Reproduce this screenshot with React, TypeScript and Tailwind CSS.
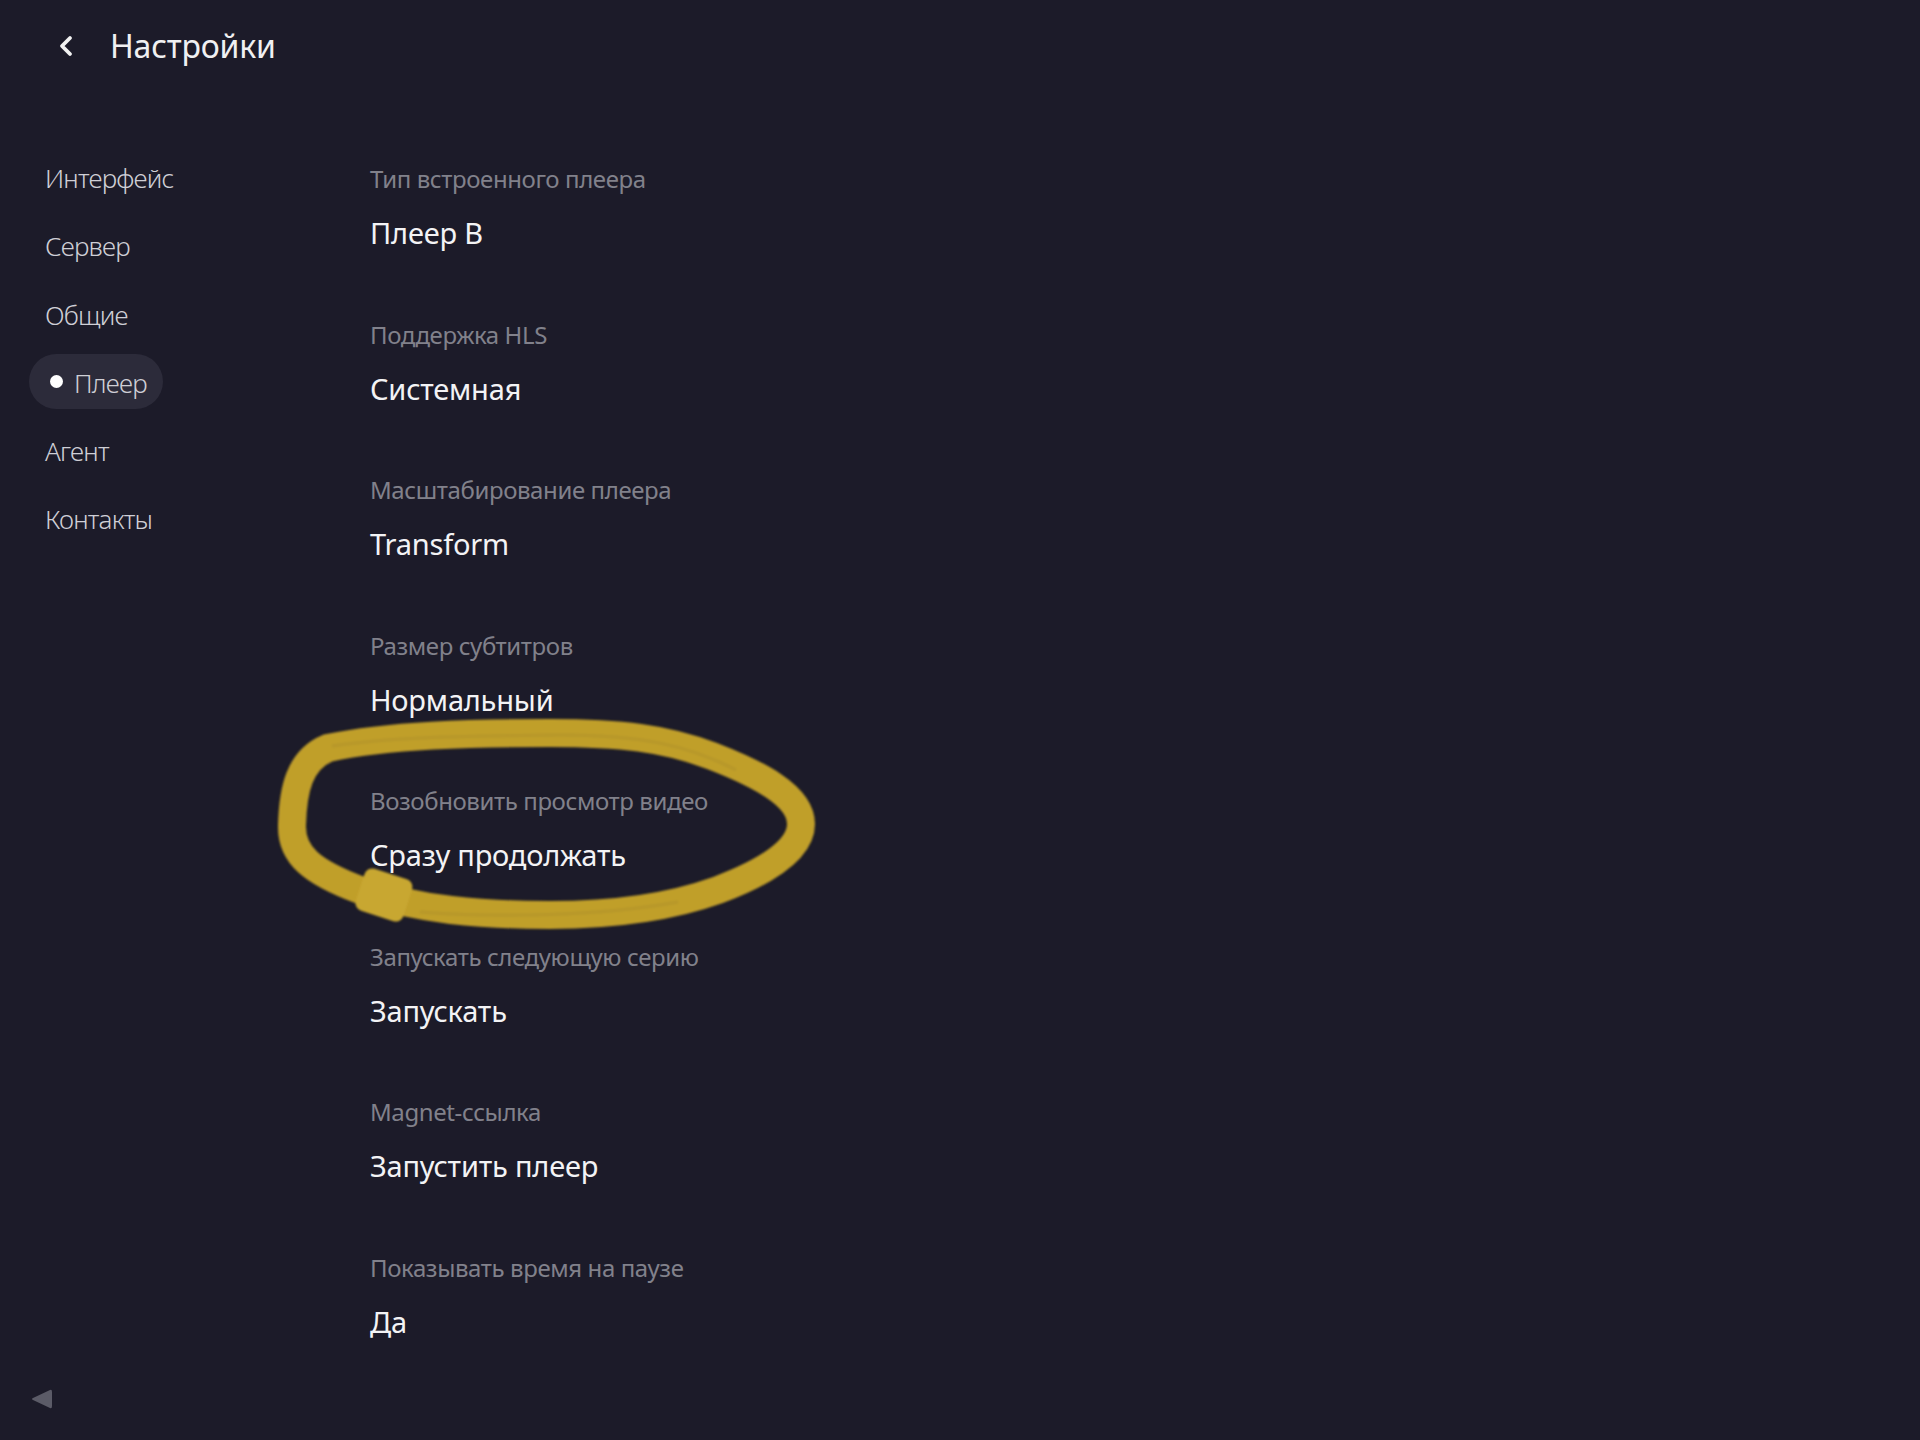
import React from "react";

const sidebar = ["Интерфейс", "Сервер", "Общие", "Плеер", "Агент", "Контакты"];
const active = "Плеер";

const settings: { label: string; value: string }[] = [
  { label: "Тип встроенного плеера", value: "Плеер B" },
  { label: "Поддержка HLS", value: "Системная" },
  { label: "Масштабирование плеера", value: "Transform" },
  { label: "Размер субтитров", value: "Нормальный" },
  { label: "Возобновить просмотр видео", value: "Сразу продолжать" },
  { label: "Запускать следующую серию", value: "Запускать" },
  { label: "Magnet-ссылка", value: "Запустить плеер" },
  { label: "Показывать время на паузе", value: "Да" },
];

function Highlight() {
  return (
    <svg
      className="pointer-events-none absolute left-0 top-0"
      width="1920"
      height="1440"
      viewBox="0 0 1920 1440"
    >
      <defs>
        <filter id="soft" x="-10%" y="-10%" width="120%" height="120%">
          <feGaussianBlur stdDeviation="1.2" />
        </filter>
      </defs>
      <g filter="url(#soft)" opacity="0.93">
        <path
          d="M 360 890 C 312 872, 291 855, 292 825 C 293 790, 299 760, 328 748 C 390 735, 470 733, 550 733 C 620 733, 665 738, 712 756 C 756 773, 801 795, 801 824 C 801 850, 766 872, 718 890 C 668 908, 610 915, 550 915 C 480 915, 420 910, 360 890 Z"
          fill="none"
          stroke="#cda92c"
          strokeWidth="28"
          strokeLinecap="round"
          strokeLinejoin="round"
        />
        <path
          d="M 332 746 C 400 736, 480 736, 560 735 C 640 735, 688 745, 736 770"
          fill="none"
          stroke="#b99a2a"
          strokeWidth="3"
          opacity="0.5"
        />
        <path
          d="M 420 912 C 500 918, 600 916, 678 902"
          fill="none"
          stroke="#b99a2a"
          strokeWidth="3"
          opacity="0.5"
        />
        <rect
          x="359"
          y="873"
          width="50"
          height="44"
          rx="8"
          fill="#d6b232"
          transform="rotate(18 384 895)"
        />
      </g>
    </svg>
  );
}

export default function App() {
  return (
    <div className="relative min-h-[1440px] w-[1920px] overflow-hidden bg-[#1c1b29] font-['Noto_Sans','Open_Sans',sans-serif]">
      {/* header */}
      <header className="flex h-[92px] items-center">
        <div className="flex w-[110px] justify-center pl-[24px] pr-[8px]">
          <svg width="18" height="22" viewBox="0 0 18 22" className="ml-[6px]">
            <polyline
              points="13,3 5,11 13,19"
              fill="none"
              stroke="#f2f2f2"
              strokeWidth="3.8"
              strokeLinecap="round"
              strokeLinejoin="round"
            />
          </svg>
        </div>
        <h1 className="text-[32px] leading-[40px] tracking-[-0.2px] text-[#f0f0f2]">Настройки</h1>
      </header>

      <div className="flex">
        {/* sidebar */}
        <nav className="flex w-[370px] flex-col gap-[13.3px] pl-[29px] pt-[57px]">
          {sidebar.map((item) =>
            item === active ? (
              <div
                key={item}
                className="flex h-[55px] w-fit items-center gap-[11px] rounded-full bg-[#2c2b3a] pl-[21px] pr-[16px] text-[26px] font-light tracking-[-0.8px] text-[#cfcfd6]"
              >
                <span className="h-[13px] w-[13px] rounded-full bg-white" />
                <span className="pt-[4px]">{item}</span>
              </div>
            ) : (
              <div
                key={item}
                className="flex h-[55px] items-center pl-[16px] text-[26px] font-light tracking-[-0.8px] text-[#cfcfd6]"
              >
                <span className="pt-[4px]">{item}</span>
              </div>
            )
          )}
        </nav>

        {/* settings list */}
        <main className="flex flex-col pt-[70px]">
          {settings.map((s) => (
            <div key={s.label} className="flex h-[155.5px] flex-col">
              <div className="text-[24px] leading-[34px] tracking-[-0.4px] text-[#81818b]">{s.label}</div>
              <div className="mt-[17px] text-[29px] leading-[40px] tracking-[-0.2px] text-[#f3f3f5]">{s.value}</div>
            </div>
          ))}
        </main>
      </div>

      {/* bottom-left back triangle */}
      <div className="absolute left-[30px] top-[1388px]">
        <svg width="24" height="22" viewBox="0 0 24 22">
          <path
            d="M 20 2 Q 22 1 22 4 L 22 18 Q 22 21 20 20 L 3 12 Q 1 11 3 10 Z"
            fill="#5b5b67"
          />
        </svg>
      </div>

      <Highlight />
    </div>
  );
}
